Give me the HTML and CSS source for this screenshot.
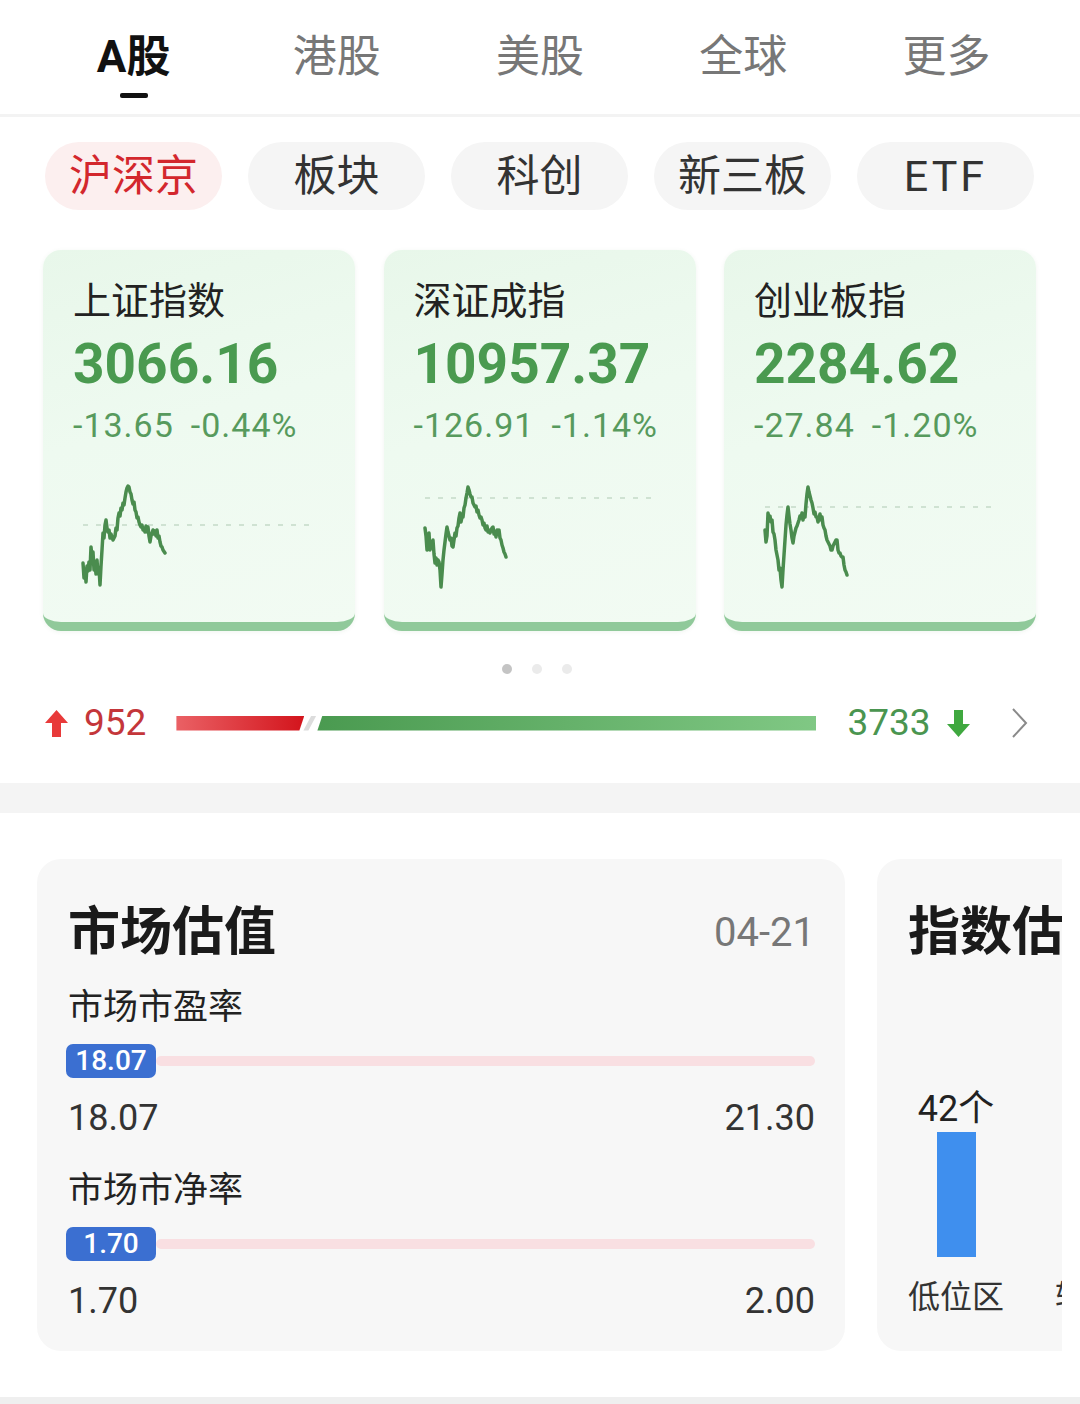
FILE: index.html
```html
<!DOCTYPE html>
<html lang="zh-CN">
<head>
<meta charset="utf-8">
<title>行情</title>
<link rel="stylesheet" href="styles.css">
</head>
<body>
<div class="page">
  <nav class="tabs">
    <div class="tab active"><span class="tab-text">A股</span><span class="tab-line"></span></div>
    <div class="tab"><span class="tab-text">港股</span></div>
    <div class="tab"><span class="tab-text">美股</span></div>
    <div class="tab"><span class="tab-text">全球</span></div>
    <div class="tab"><span class="tab-text">更多</span></div>
  </nav>
  <div class="divider"></div>

  <div class="chips">
    <div class="chip active">沪深京</div>
    <div class="chip">板块</div>
    <div class="chip">科创</div>
    <div class="chip">新三板</div>
    <div class="chip etf">ETF</div>
  </div>

  <div class="cards">
    <div class="card">
      <div class="card-title">上证指数</div>
      <div class="card-value">3066.16</div>
      <div class="card-change"><span>-13.65</span><span>-0.44%</span></div>
      <svg class="spark" viewBox="0 0 280 130" width="280" height="130">
        <line x1="10" y1="55" x2="244" y2="55" class="dash"/>
        <path class="line" d="M10,93 L11,108 L12,99 L13,112 L14,96 L15,101 L16,92 L17,100 L18,77 L19,88 L20,82 L21,100 L22,94 L23,104 L24,90 L25,104 L26,98 L27,115 L28,96 L29,80 L30,63 L31,68 L32,55 L33,50 L34,58 L35,62 L36,60 L37,68 L38,64 L40,70 L42,66 L43,58 L44,60 L45,48 L46,43 L47,46 L48,38 L49,40 L50,33 L51,35 L52,28 L53,22 L54,18 L55,16 L56,17 L57,22 L58,24 L59,30 L60,34 L61,32 L62,40 L63,42 L64,48 L65,47 L66,52 L67,55 L68,57 L69,55 L70,60 L71,58 L72,62 L73,56 L74,62 L75,57 L76,66 L77,72 L78,66 L79,63 L80,60 L81,64 L82,61 L83,66 L84,60 L85,68 L86,66 L87,72 L88,76 L89,77 L90,80 L92,83"/>
      </svg>
    </div>
    <div class="card">
      <div class="card-title">深证成指</div>
      <div class="card-value">10957.37</div>
      <div class="card-change"><span>-126.91</span><span>-1.14%</span></div>
      <svg class="spark" viewBox="0 0 280 130" width="280" height="130">
        <line x1="11" y1="28" x2="243" y2="28" class="dash"/>
        <path class="line" d="M11,58 L12,66 L13,80 L14,70 L15,63 L16,80 L17,74 L18,78 L19,70 L20,84 L21,93 L22,88 L23,95 L24,90 L25,92 L26,100 L27,117 L28,104 L29,90 L30,80 L31,72 L32,64 L33,57 L34,62 L35,66 L36,70 L37,68 L38,76 L39,77 L40,70 L41,63 L42,66 L43,58 L44,56 L45,48 L46,43 L47,52 L48,47 L49,47 L50,38 L51,35 L52,28 L53,23 L54,17 L55,20 L56,24 L57,27 L58,27 L59,33 L60,35 L61,37 L62,36 L63,42 L64,40 L65,45 L66,48 L67,47 L68,50 L69,55 L70,53 L71,58 L72,60 L73,56 L74,62 L75,60 L76,63 L77,60 L78,58 L79,57 L80,64 L81,62 L82,67 L83,60 L84,62 L85,60 L86,68 L87,70 L88,75 L89,78 L90,82 L91,84 L92,87"/>
      </svg>
    </div>
    <div class="card">
      <div class="card-title">创业板指</div>
      <div class="card-value">2284.62</div>
      <div class="card-change"><span>-27.84</span><span>-1.20%</span></div>
      <svg class="spark" viewBox="0 0 280 130" width="280" height="130">
        <line x1="11" y1="37" x2="243" y2="37" class="dash"/>
        <path class="line" d="M11,60 L12,72 L13,66 L14,43 L15,48 L16,46 L17,52 L18,50 L19,62 L20,64 L21,70 L22,80 L23,85 L24,90 L25,100 L26,98 L27,110 L28,117 L29,100 L30,85 L31,70 L32,55 L33,45 L34,37 L35,46 L36,54 L37,60 L38,68 L39,73 L40,66 L41,62 L42,58 L43,56 L44,53 L45,50 L46,46 L47,48 L48,43 L49,50 L50,44 L51,47 L52,34 L53,24 L54,17 L55,22 L56,26 L57,30 L58,33 L59,38 L60,44 L61,42 L62,47 L63,47 L64,52 L65,48 L66,44 L67,50 L68,47 L69,55 L70,58 L71,60 L72,66 L73,70 L74,72 L75,74 L76,76 L77,80 L78,80 L79,76 L80,74 L81,72 L82,70 L83,70 L84,80 L85,83 L86,83 L87,86 L88,87 L89,87 L90,95 L91,100 L92,102 L93,105"/>
      </svg>
    </div>
  </div>

  <div class="dots"><span class="dot on"></span><span class="dot"></span><span class="dot"></span></div>

  <div class="breadth">
    <svg class="arrow" viewBox="0 0 23 27" width="23" height="27"><path d="M11.5 0 L23 13 L16 13 L16 27 L7 27 L7 13 L0 13 Z" fill="#e83a3a"/></svg>
    <span class="up-num">952</span>
    <div class="bar">
      <span class="bar-red"></span>
      <span class="bar-gap"></span>
      <span class="bar-green"></span>
    </div>
    <span class="down-num">3733</span>
    <svg class="arrow down" viewBox="0 0 23 27" width="23" height="27"><path d="M11.5 27 L23 14 L16 14 L16 0 L7 0 L7 14 L0 14 Z" fill="#3fa83f"/></svg>
    <svg class="chev" viewBox="0 0 18 32" width="18" height="32"><polyline points="2,2 15,16 2,30" fill="none" stroke="#8a8a8a" stroke-width="2"/></svg>
  </div>

  <div class="band"></div>

  <section class="valuation">
    <div class="val-track">
      <div class="vcard main">
        <div class="vhead">
          <h2 class="vtitle">市场估值</h2>
          <span class="vdate">04-21</span>
        </div>
        <div class="vlabel">市场市盈率</div>
        <div class="meter"><span class="badge">18.07</span><span class="track"></span></div>
        <div class="range"><span>18.07</span><span>21.30</span></div>
        <div class="vlabel second">市场市净率</div>
        <div class="meter"><span class="badge">1.70</span><span class="track"></span></div>
        <div class="range"><span>1.70</span><span>2.00</span></div>
      </div>
      <div class="vcard side">
        <h2 class="vtitle">指数估值</h2>
        <div class="chart">
          <div class="col"><span class="col-num">42个</span><span class="col-bar" style="height:125px"></span></div>
        </div>
        <div class="col-labels"><span>低位区</span><span>较低区</span></div>
      </div>
    </div>
  </section>
  <div class="bottom-line"></div>
</div>
</body>
</html>
```

FILE: styles.css
```css
* { box-sizing: border-box; }
html, body { margin: 0; padding: 0; background: #fff; }
body {
  font-family: Roboto, "Noto Sans CJK SC", sans-serif;
  color: #222;
  width: 1080px;
  overflow: hidden;
}
.page { width: 1080px; height: 1404px; overflow: hidden; position: relative; }

/* top tabs */
.tabs {
  display: flex;
  padding: 32px 32px 0;
  height: 114px;
}
.tab {
  flex: 1;
  display: flex;
  flex-direction: column;
  align-items: center;
}
.tab-text {
  font-size: 44px;
  line-height: 50px;
  color: #777;
}
.tab.active .tab-text { color: #111; font-weight: 700; }
.tab-line {
  margin-top: 11px;
  width: 28px;
  height: 5px;
  border-radius: 2px;
  background: #111;
}
.divider { height: 3px; background: #f3f3f3; }

/* chips */
.chips {
  display: grid;
  grid-template-columns: repeat(5, 1fr);
  gap: 26px;
  padding: 25px 46px 0 45px;
}
.chip {
  height: 68px;
  line-height: 68px;
  border-radius: 34px;
  background: #f5f5f5;
  text-align: center;
  font-size: 43px;
  color: #333;
}
.chip.active { background: #fcefef; color: #d3272d; }
.chip.etf { letter-spacing: 3px; }

/* index cards */
.cards {
  display: grid;
  grid-template-columns: repeat(3, 312px);
  column-gap: 28.5px;
  padding: 40px 0 0 43px;
}
.card {
  background: linear-gradient(165deg, #e8f7ea 0%, #eefaf0 45%, #f2fbf3 100%);
  border-radius: 18px;
  border-bottom: 9px solid #90c99a;
  padding: 28px 0 22px 30px;
  box-shadow: 0 1px 4px rgba(60, 120, 70, 0.08);
}
.card-title {
  font-size: 38px;
  line-height: 46px;
  color: #222;
}
.card-value {
  margin-top: 10px;
  font-size: 55px;
  line-height: 60px;
  font-weight: 700;
  color: #4a9a50;
}
.card-change {
  margin-top: 9px;
  font-size: 34px;
  line-height: 44px;
  color: #579a5d;
  letter-spacing: 1px;
  display: flex;
  gap: 17px;
}
.spark { display: block; margin-top: 23px; }
.spark .dash { stroke: #cfe2d2; stroke-width: 2; stroke-dasharray: 5 8; }
.spark .line { fill: none; stroke: #4a8c4e; stroke-width: 3.5; stroke-linejoin: round; stroke-linecap: round; }

/* dots */
.dots {
  display: flex;
  justify-content: center;
  gap: 20px;
  margin-top: 33px;
  padding-right: 6px;
}
.dot { width: 10px; height: 10px; border-radius: 50%; background: #ebebeb; }
.dot.on { background: #c4c4c4; }

/* breadth */
.breadth {
  display: flex;
  align-items: center;
  height: 50px;
  margin-top: 24px;
  padding-left: 45px;
}
.arrow { display: block; flex: none; }
.up-num {
  margin-left: 16px;
  font-size: 37px;
  color: #c4363a;
  line-height: 50px;
}
.bar {
  margin-left: 30px;
  width: 640px;
  height: 15px;
  display: flex;
}
.bar-red {
  width: 128px;
  background: linear-gradient(90deg, #ea6165, #d3141c);
  clip-path: polygon(0 0, 100% 0, calc(100% - 5px) 100%, 0 100%);
}
.bar-gap {
  width: 13px;
  margin-left: -1px;
  background: #dcdcdc;
  clip-path: polygon(8px 0, 13px 0, 5px 100%, 0 100%);
}
.bar-green {
  flex: 1;
  margin-left: 1px;
  background: linear-gradient(90deg, #4a9a50, #80c884);
  clip-path: polygon(5px 0, 100% 0, 100% 100%, 0 100%);
}
.down-num {
  margin-left: 31px;
  font-size: 37px;
  color: #4a9550;
  line-height: 50px;
}
.arrow.down { margin-left: 16px; }
.chev { display: block; margin-left: 41px; }

.band { height: 30px; background: #f4f4f4; margin-top: 35px; }

/* valuation */
.valuation { padding: 46px 0 0 37px; }
.val-track {
  width: 1025px;
  overflow: hidden;
  display: flex;
  gap: 32px;
}
.vcard {
  flex: none;
  background: #f7f7f7;
  border-radius: 24px;
  height: 492px;
}
.vcard.main { width: 808px; padding: 42px 30px 0 31px; }
.vcard.side { width: 360px; padding: 42px 0 0 31px; }
.vhead { display: flex; justify-content: space-between; align-items: center; }
.vtitle {
  margin: 0;
  font-size: 52px;
  line-height: 64px;
  font-weight: 700;
  color: #1a1a1a;
  white-space: nowrap;
}
.vdate { font-size: 40px; color: #777; line-height: 64px; }
.vlabel {
  margin-top: 21px;
  font-size: 35px;
  line-height: 44px;
  color: #222;
}
.vlabel.second { margin-top: 29px; }
.meter {
  margin-top: 14px;
  display: flex;
  align-items: center;
  height: 34px;
}
.badge {
  flex: none;
  width: 90px;
  height: 34px;
  line-height: 34px;
  text-align: center;
  background: #3b6fd1;
  color: #fff;
  border-radius: 7px;
  font-size: 28px;
  font-weight: 500;
  margin-left: -2px;
}
.track {
  flex: 1;
  height: 10px;
  border-radius: 5px;
  background: #f9dfe2;
}
.range {
  margin-top: 18px;
  display: flex;
  justify-content: space-between;
  font-size: 36px;
  line-height: 44px;
  color: #333;
}
.chart {
  height: 292px;
  display: flex;
  align-items: flex-end;
  gap: 51px;
}
.col {
  width: 96px;
  flex: none;
  display: flex;
  flex-direction: column;
  align-items: center;
}
.col-num { font-size: 36px; line-height: 40px; color: #222; margin-bottom: 3px; white-space: nowrap; }
.col-bar { display: block; width: 39px; background: #3f8fee; }
.col-labels {
  margin-top: 18px;
  display: flex;
  gap: 51px;
  font-size: 32px;
  line-height: 44px;
  color: #333;
  white-space: nowrap;
}
.col-labels span { flex: none; width: 96px; text-align: center; }

.bottom-line {
  position: absolute;
  left: 0; right: 0; bottom: 0;
  height: 7px;
  background: #efefef;
}
```
